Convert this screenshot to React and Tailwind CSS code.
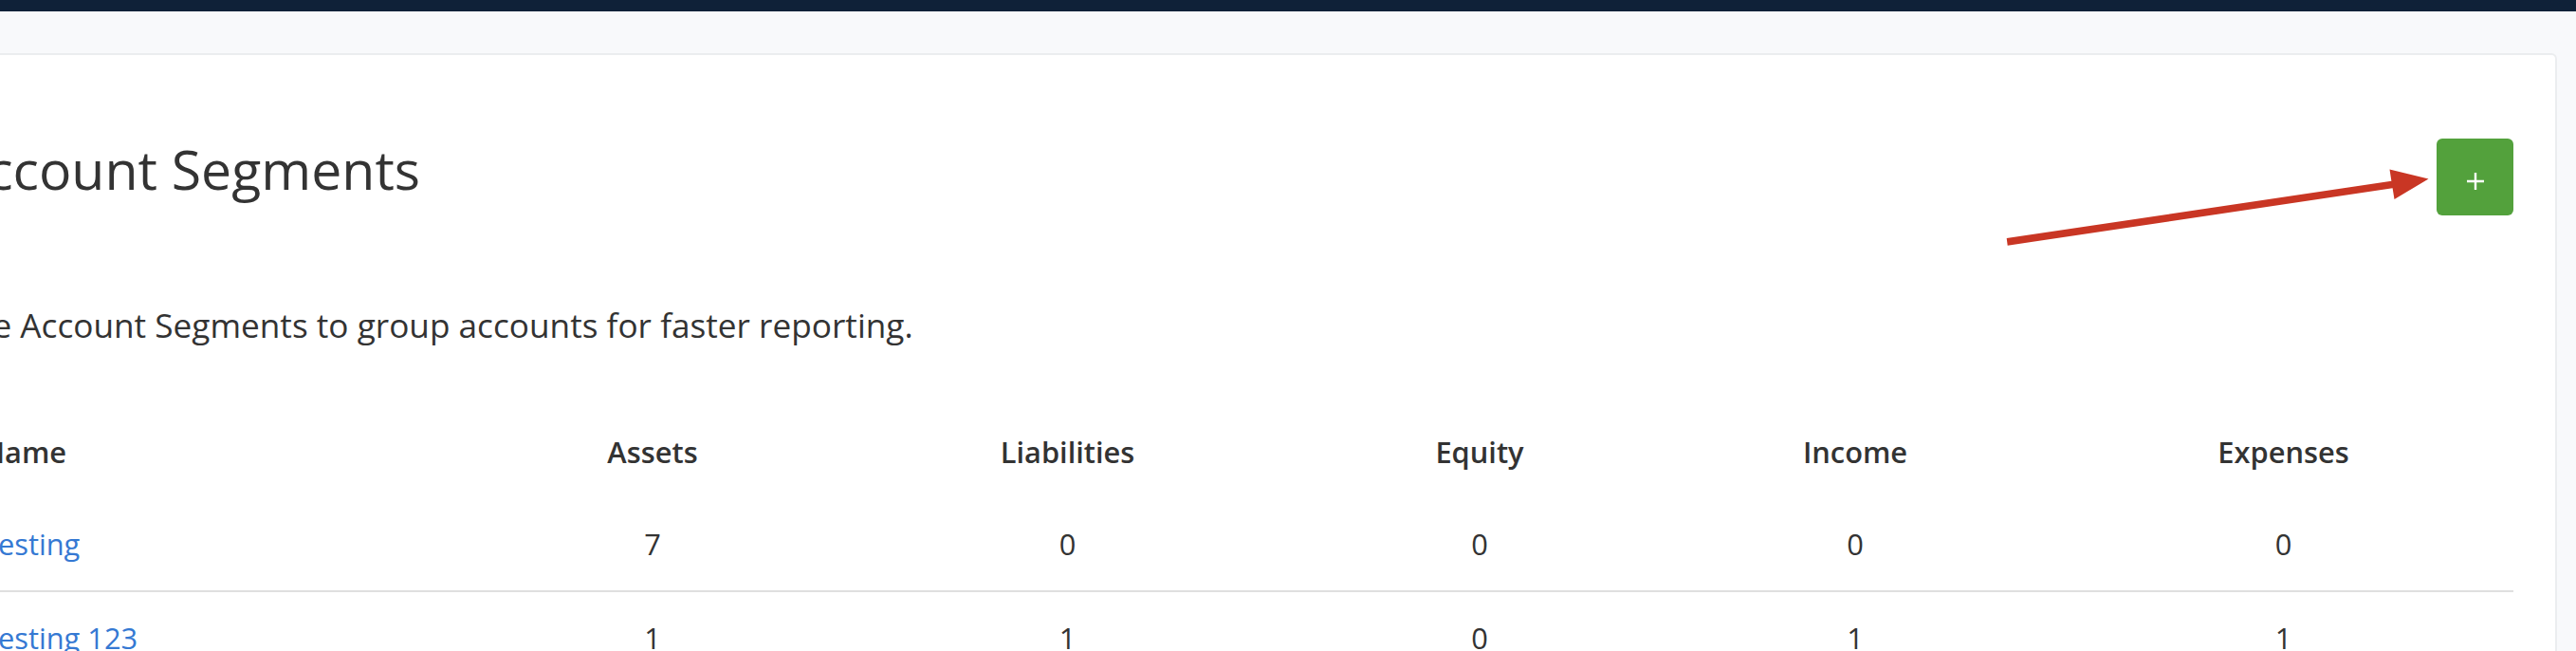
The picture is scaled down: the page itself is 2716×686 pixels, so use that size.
const columns = ["Assets", "Liabilities", "Equity", "Income", "Expenses"];

const segments = [
  { name: "Testing", counts: [7, 0, 0, 0, 0] },
  { name: "Testing 123", counts: [1, 1, 0, 1, 1] },
];

function SegmentTable() {
  return (
    <table className="mt-[60px] w-full table-fixed border-separate border-spacing-0 text-[30.8px] leading-[44px]">
      <colgroup>
        <col />
        <col className="w-[380px]" />
        <col className="w-[495px]" />
        <col className="w-[374px]" />
        <col className="w-[418px]" />
        <col className="w-[485px]" />
      </colgroup>
      <thead>
        <tr className="h-[96px] align-top">
          <th className="pt-[25px] pl-[31px] text-left font-semibold">Name</th>
          {columns.map((column) => (
            <th key={column} className="pt-[25px] text-center font-semibold">{column}</th>
          ))}
        </tr>
      </thead>
      <tbody>
        {segments.map((segment) => (
          <tr key={segment.name} className="h-[99px] align-top">
            <td className="border-b-2 border-[#dfdfdf] pt-[26px] pl-[31px] text-left">
              <a href="#" className="text-[#3579d3]">{segment.name}</a>
            </td>
            {segment.counts.map((count, i) => (
              <td key={columns[i]} className="border-b-2 border-[#dfdfdf] pt-[26px] text-center">{count}</td>
            ))}
          </tr>
        ))}
      </tbody>
    </table>
  );
}

function Arrow() {
  return (
    <svg viewBox="0 0 450 90" className="absolute top-[175px] left-[2113px] h-[90px] w-[450px]" fill="#c93624">
      <path d="M2.7 76 L408.4 15.7 L406.5 3.6 L447.5 13.5 L411.5 35 L409.6 23.3 L3.7 83.7 Z" />
    </svg>
  );
}

export default function App() {
  return (
    <div className="relative h-[686px] w-full overflow-hidden bg-[#f8f9fb] font-['Open_Sans',sans-serif] text-[#333333]">
      <div className="h-3 bg-[#0f2138]" />
      <main className="mt-11 mr-5 -ml-24 h-[760px] rounded-md border-2 border-[#ebedef] bg-white pt-[88px] pr-11 pl-11">
        <header className="flex items-start justify-between">
          <h1 className="-mt-2.5 text-[57.2px] leading-[84px]">Account Segments</h1>
          <button aria-label="Add segment" className="flex size-[81px] items-center justify-center rounded-md bg-[#53a13c]">
            <svg viewBox="0 0 18 18" className="mt-[9px] size-[18px]" stroke="white" strokeWidth="2.4">
              <path d="M9 0 V18 M0 9 H18" />
            </svg>
          </button>
        </header>
        <p className="mt-[88px] text-[35.2px] leading-[54px]">Use Account Segments to group accounts for faster reporting.</p>
        <SegmentTable />
      </main>
      <Arrow />
    </div>
  );
}
